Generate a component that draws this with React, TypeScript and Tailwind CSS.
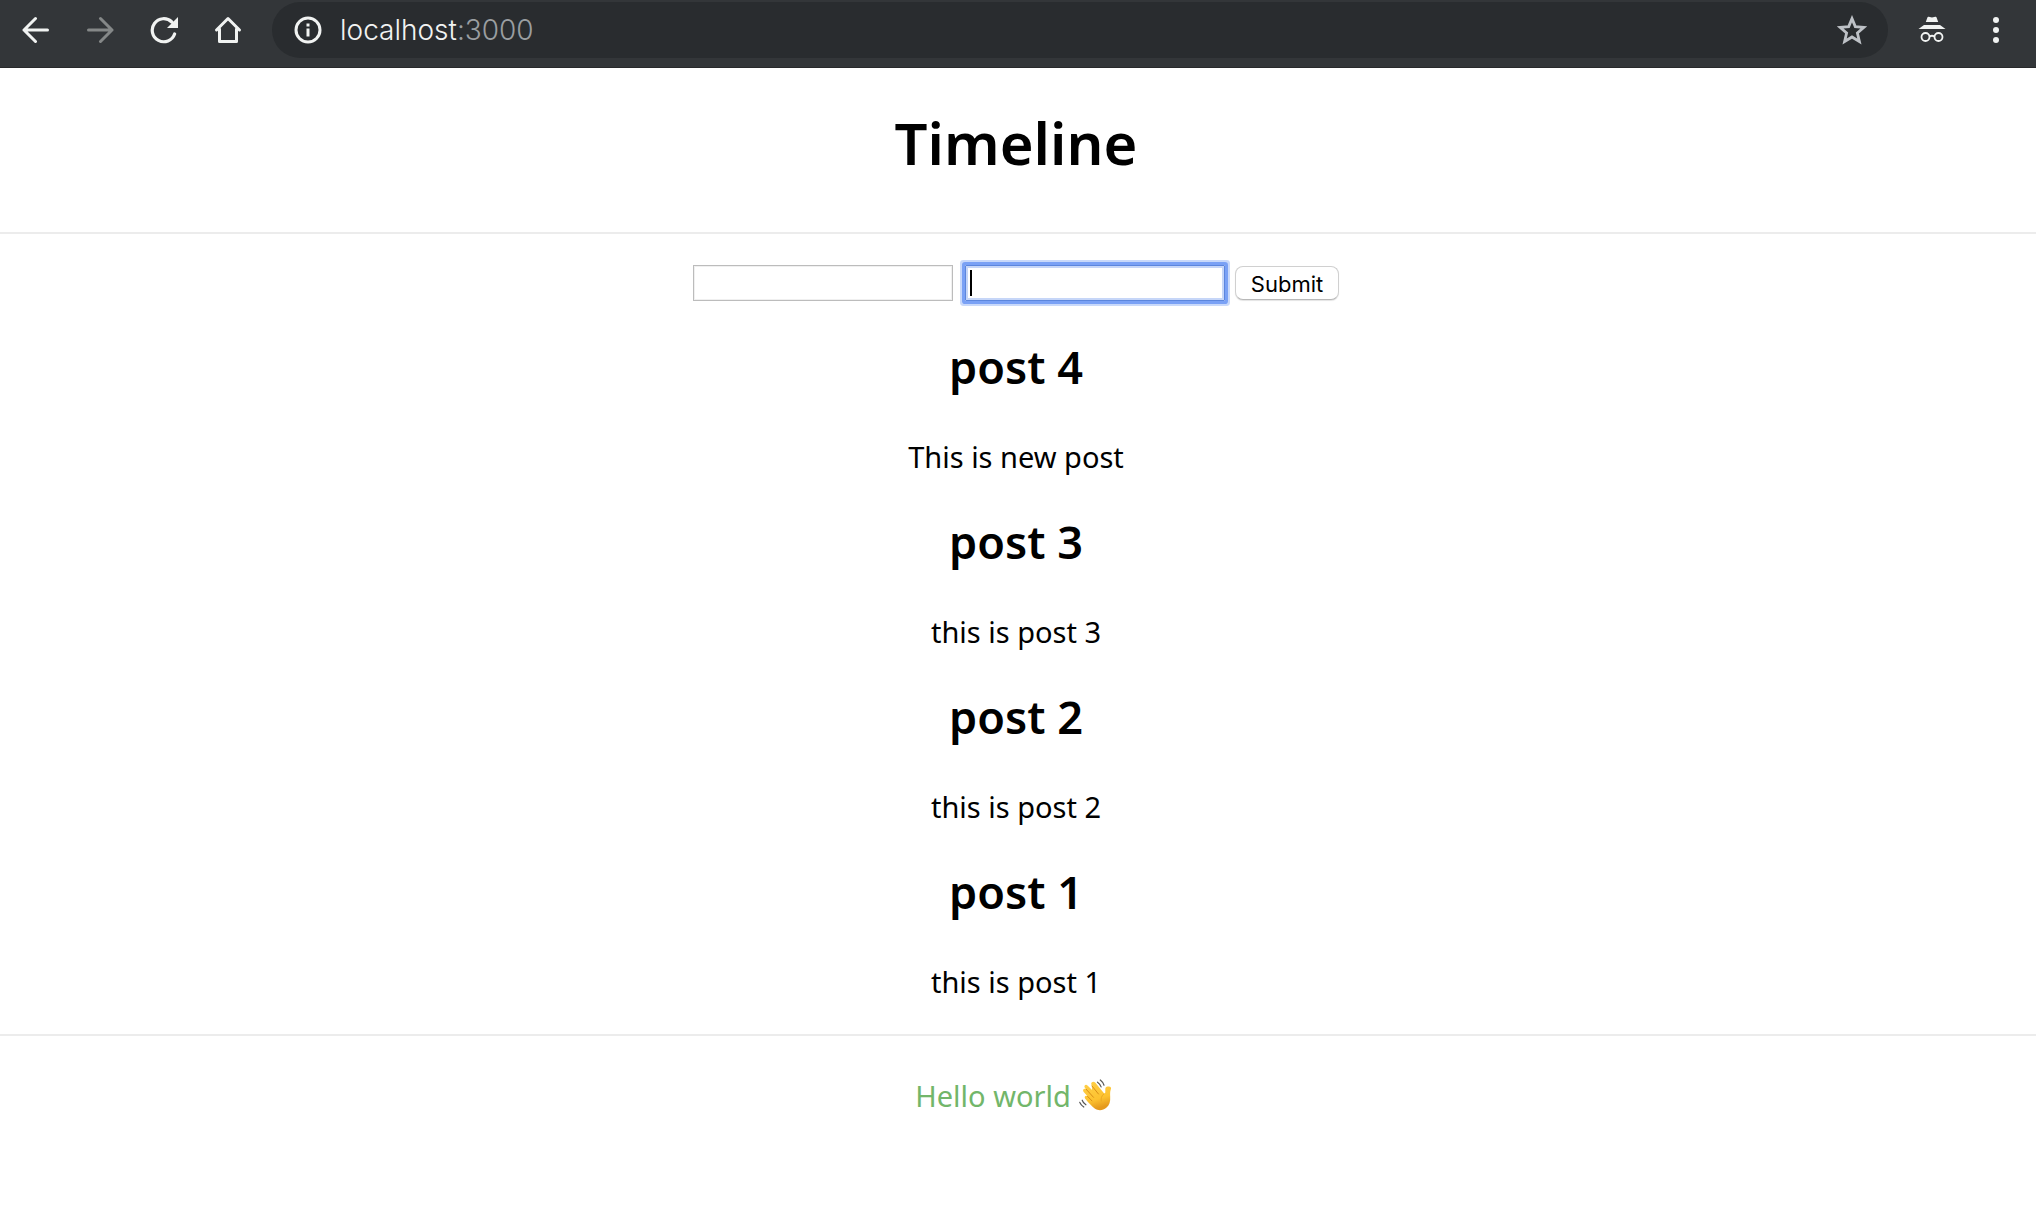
import { useState } from "react";

const posts = [
  { title: "post 4", body: "This is new post" },
  { title: "post 3", body: "this is post 3" },
  { title: "post 2", body: "this is post 2" },
  { title: "post 1", body: "this is post 1" },
];

function BackIcon() {
  return (
    <svg viewBox="0 0 28 28" className="size-7" fill="none" stroke="currentColor" strokeWidth="3" strokeLinecap="round" strokeLinejoin="round">
      <path d="M25.500 14H2M13.500 2.500L2 14l11.500 11.500" />
    </svg>
  );
}

function ForwardIcon() {
  return (
    <svg viewBox="0 0 28 28" className="size-7" fill="none" stroke="currentColor" strokeWidth="3" strokeLinecap="round" strokeLinejoin="round">
      <path d="M2.500 14H26M14.500 2.500L26 14 14.500 25.500" />
    </svg>
  );
}

function ReloadIcon() {
  return (
    <svg viewBox="0 0 28 28" className="size-7" fill="none">
      <path d="M21.800 6A11.500 11.500 0 1 0 24.600 18" stroke="currentColor" strokeWidth="3.200" strokeLinecap="round" />
      <path d="M28 1v11H17z" fill="currentColor" />
    </svg>
  );
}

function HomeIcon() {
  return (
    <svg viewBox="0 0 28 28" className="size-7" fill="none" stroke="currentColor" strokeWidth="3" strokeLinecap="round" strokeLinejoin="round">
      <path d="M2.500 14L14 2.500 25.500 14M5.500 13v12.500h17V13" />
    </svg>
  );
}

function InfoIcon() {
  return (
    <svg viewBox="0 0 28 28" className="size-7 shrink-0" fill="none">
      <circle cx="14" cy="14" r="12" stroke="currentColor" strokeWidth="3" />
      <path d="M12.500 7.500h3v3h-3zM12.500 12.500h3v8h-3z" fill="currentColor" />
    </svg>
  );
}

function StarIcon() {
  return (
    <svg viewBox="0 0 30 30" className="size-[30px]" fill="none" stroke="currentColor" strokeWidth="2.800">
      <path d="M15 3.600l3.300 8 8.600.700-6.500 5.700 2 8.500L15 22l-7.400 4.500 2-8.500-6.500-5.700 8.600-.700z" />
    </svg>
  );
}

function IncognitoIcon() {
  return (
    <svg viewBox="0 0 28 28" className="size-7" fill="none">
      <path d="M9.400 1.500q.400-1 1.400-.700l3.200.800 3.200-.800q1-.300 1.400.700L20.200 6H7.800zM6 9h16l5.500 4H.500z" fill="currentColor" />
      <circle cx="7.500" cy="21" r="4" stroke="currentColor" strokeWidth="1.800" />
      <circle cx="20.500" cy="21" r="4" stroke="currentColor" strokeWidth="1.800" />
      <path d="M11.500 20.500q2.500-1.500 5 0" stroke="currentColor" strokeWidth="1.800" />
    </svg>
  );
}

function MenuIcon() {
  return (
    <svg viewBox="0 0 28 28" className="size-7" fill="currentColor">
      <circle cx="14" cy="4" r="3" />
      <circle cx="14" cy="14" r="3" />
      <circle cx="14" cy="24" r="3" />
    </svg>
  );
}

function WaveIcon() {
  return (
    <svg viewBox="0 0 34 34" className="size-[34px] shrink-0" role="img" aria-label="waving hand" fill="none" strokeLinecap="round">
      <defs>
        <linearGradient id="skin" x1="0" y1="0" x2="0.300" y2="1">
          <stop offset="0" stopColor="#ffd04a" />
          <stop offset="0.700" stopColor="#fdc22f" />
          <stop offset="1" stopColor="#e59a1c" />
        </linearGradient>
      </defs>
      <path
        d="M13 3.200c1-1 2.400-.600 3.400.600l8.400 10.300c.900.600 1.500.100 1.500-1.100V10c0-2 1.500-3.100 3.500-2.400 2.200.300 2.700 1.300 1.900 3.200-.700 2-.600 4-.500 7 .300 5-.800 8.700-3.900 11-3.300 2.900-8 3.300-11.600.700-2.800-2-5.600-5.200-9.500-9.800-1.500-2 .500-4 2.300-2.400l-4-4.600c-1.400-2 .800-4 2.600-2.300L5.800 8.700c-1.300-2 .900-4 2.700-2.300l4.600 4.500L12.700 6c-.800-1.100-.600-2 .300-2.800z"
        fill="url(#skin)"
      />
      <path d="M7.200 10.300l7.300 8M8.600 17.400l4.400 4.500M13 7l6.500 8" stroke="#d98f16" strokeWidth="1" />
      <path d="M24.600 15.200c-2 1.800-2.900 4-2.300 6.800" stroke="#eba823" strokeWidth="1" />
      <path d="M18.500 3.200c1.800 1.200 2.900 2.900 3.600 4.700M21.300 1c2 1.500 3.100 3.300 3.700 5.200" stroke="#555" strokeWidth="1.200" />
      <path d="M3.200 21.200c.700 2 1.900 3.500 3.700 4.600M.800 23.400c.900 2 2.300 3.500 4 4.600" stroke="#555" strokeWidth="1.200" />
    </svg>
  );
}

function BrowserBar() {
  return (
    <header className="flex h-[68px] items-start border-b border-[#28292b] bg-[#333639] pt-0.5 pr-6.5 pl-[22px] text-[#f1f3f2]">
      <nav className="flex h-14 items-center gap-9" aria-label="Browser">
        <button type="button" aria-label="Back"><BackIcon /></button>
        <button type="button" aria-label="Forward" disabled className="text-[#858888]"><ForwardIcon /></button>
        <button type="button" aria-label="Reload"><ReloadIcon /></button>
        <button type="button" aria-label="Home"><HomeIcon /></button>
      </nav>
      <div className="ml-[30px] flex h-14 flex-1 items-center rounded-full bg-[#292c2f] pr-[21px] pl-[22px]">
        <InfoIcon />
        <a href="http://localhost:3000" className="ml-[18px] flex-1 font-['Inter',sans-serif] text-[28px] leading-9 font-light">
          localhost<span className="text-[#9a9ea1]">:3000</span>
        </a>
        <button type="button" aria-label="Bookmark" className="text-[#bdc1c6]"><StarIcon /></button>
      </div>
      <div className="ml-[30px] flex h-14 items-center gap-9">
        <button type="button" aria-label="Incognito"><IncognitoIcon /></button>
        <button type="button" aria-label="Menu"><MenuIcon /></button>
      </div>
    </header>
  );
}

export default function App() {
  const [title, setTitle] = useState("");
  const [body, setBody] = useState("");
  return (
    <div className="min-h-screen bg-white font-['Noto_Sans',sans-serif] text-black">
      <BrowserBar />
      <h1 className="border-b-2 border-[#ececec] pt-[35px] pr-1 pb-[49px] text-center text-[58px] leading-[80px] font-semibold">Timeline</h1>
      <main className="border-b-2 border-[#ececec] pt-[31px] pr-1 pb-8 text-center">
        <form className="flex items-center justify-center" onSubmit={(e) => e.preventDefault()}>
          <input
            aria-label="Title"
            value={title}
            onChange={(e) => setTitle(e.target.value)}
            className="h-9 w-[260px] border border-[#bcbcbc] px-1 text-[22px] shadow-[inset_0_0_0_1px_#f0f0f0] outline-none"
          />
          <div className="relative ml-3">
            <input
              aria-label="Body"
              value={body}
              onChange={(e) => setBody(e.target.value)}
              className="block h-9 w-[260px] rounded-[1px] border border-[#5c86dd] px-1 text-[22px] caret-transparent shadow-[inset_0_0_0_2px_#c6d6f8,0_0_0_3px_#7aa1f5,0_0_0_5px_#c9d9fa] outline-none"
            />
            <span className="absolute top-[5px] left-[5px] h-[26px] w-0.5 bg-black" />
          </div>
          <button
            type="submit"
            className="ml-2.5 h-[34px] w-[104px] rounded-lg border border-[#d0d0d0] border-b-[#b8b8b8] bg-white pt-0.5 font-['Inter',sans-serif] text-[22px] leading-7 shadow-[0_1px_1px_#e4e4e4]"
          >
            Submit
          </button>
        </form>
        <div className="mt-9 flex flex-col gap-[35px]">
          {posts.map((post) => (
            <article key={post.title} className="flex flex-col gap-10">
              <h2 className="text-[45px] leading-[60px] font-semibold">{post.title}</h2>
              <p className="text-[29px] leading-10">{post.body}</p>
            </article>
          ))}
        </div>
      </main>
      <footer className="flex items-center justify-center gap-2 pt-10 pr-2 text-[29px] leading-10 text-[#72b66a]">
        <p>Hello world</p>
        <WaveIcon />
      </footer>
    </div>
  );
}
